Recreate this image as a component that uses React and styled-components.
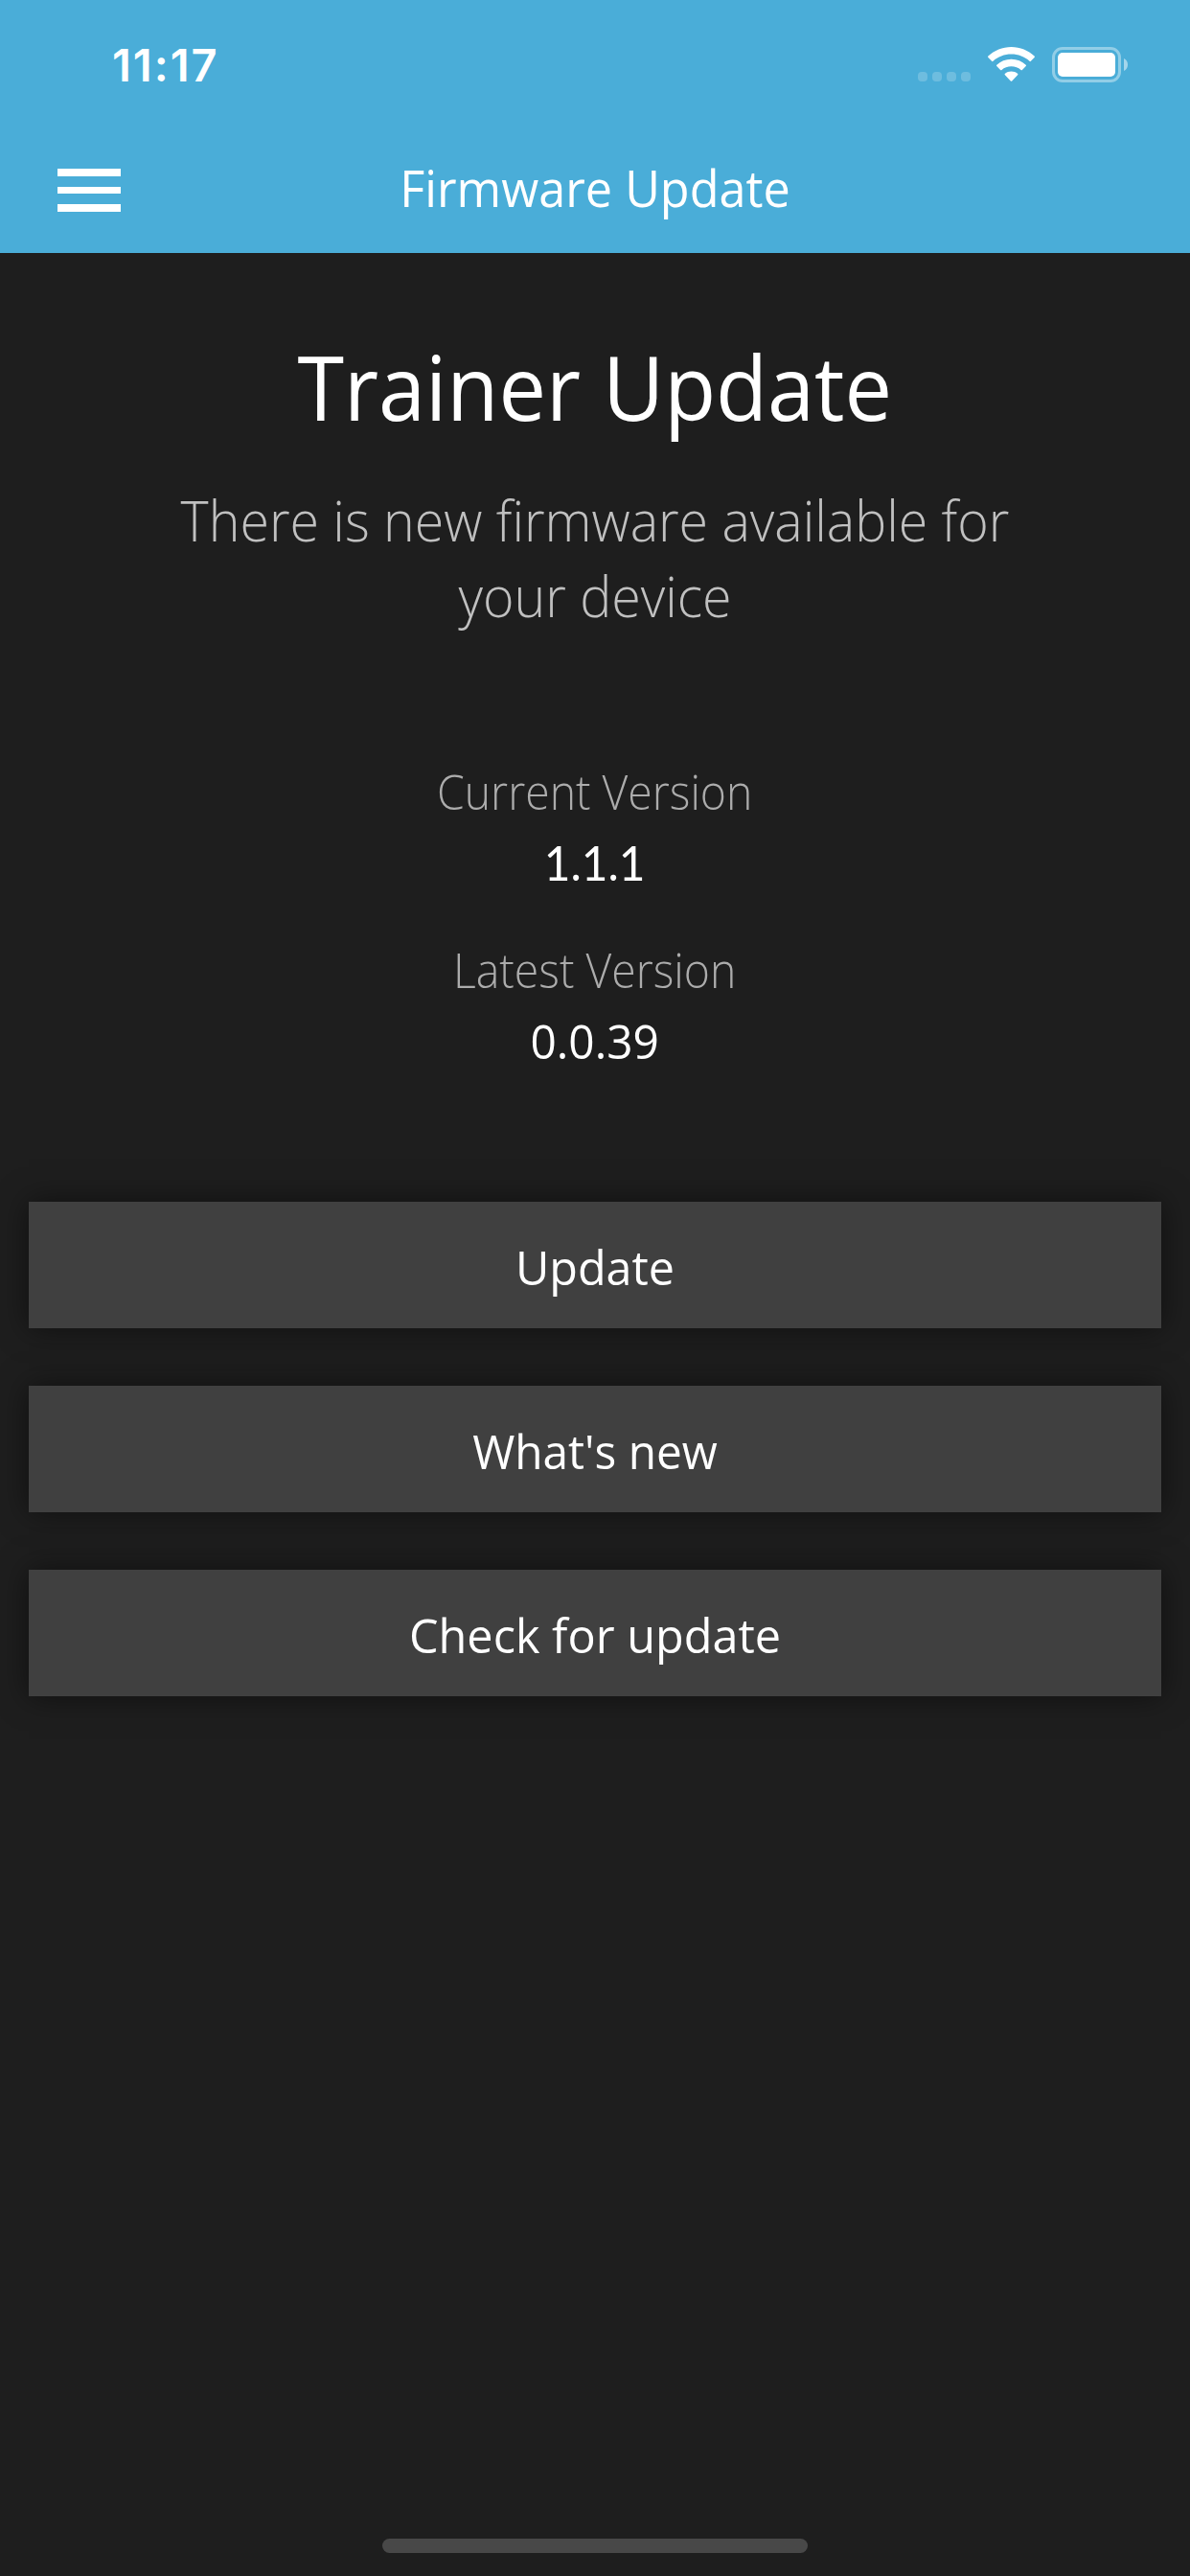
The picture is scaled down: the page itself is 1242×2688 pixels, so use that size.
import React from 'react';
import styled, { createGlobalStyle } from 'styled-components';

const actions = [
  { text: 'Update', scale: 0.97 },
  { text: "What's new", scale: 0.955 },
  { text: 'Check for update', scale: 0.972 },
];

function App() {
  return (
    <Screen>
      <GlobalStyle />
      <Header>
        <StatusBar>
          <Time>11:17</Time>
          <StatusIcons>
            <Signal>
              <Dot />
              <Dot />
              <Dot />
              <Dot />
            </Signal>
            <WifiIcon />
            <Battery>
              <BatteryBody>
                <BatteryLevel />
              </BatteryBody>
              <BatteryCap viewBox='0 0 4 13'>
                <path d='M0 0C2.4 1 4 3.5 4 6.5S2.4 12 0 13Z' fill='#fff' />
              </BatteryCap>
            </Battery>
          </StatusIcons>
        </StatusBar>
        <NavBar>
          <MenuButton aria-label='Menu'>
            <MenuBar />
            <MenuBar />
            <MenuBar />
          </MenuButton>
          <NavTitle>Firmware Update</NavTitle>
        </NavBar>
      </Header>
      <Content>
        <Title>Trainer Update</Title>
        <Message>There is new firmware available for your device</Message>
        <Versions>
          <VersionItem>
            <Label>Current Version</Label>
            <Value $font='Lato' $scale={0.955}>1.1.1</Value>
          </VersionItem>
          <VersionItem>
            <Label>Latest Version</Label>
            <Value $scale={0.956}>0.0.39</Value>
          </VersionItem>
        </Versions>
        <Actions>
          {actions.map(({ text, scale }) => (
            <Button key={text}>
              <ButtonText $scale={scale}>{text}</ButtonText>
            </Button>
          ))}
        </Actions>
      </Content>
      <Footer>
        <HomeIndicator />
      </Footer>
    </Screen>
  );
}

function WifiIcon() {
  return (
    <Wifi viewBox='0 0 49 36'>
      <path d='M24.5 0C33.7 0 42.3 3.6 48.6 9.6Q49.3 10.3 48.6 11L44.9 14.8Q44.2 15.5 43.5 14.8C38.5 10.2 31.8 7.6 24.5 7.6S10.5 10.2 5.5 14.8Q4.8 15.5 4.1 14.8L.4 11Q-.3 10.3 .4 9.6C6.7 3.6 15.3 0 24.5 0Z' />
      <path d='M24.5 12.8C30.4 12.8 35.7 15 39.7 18.7Q40.4 19.4 39.7 20.1L35.9 24Q35.2 24.7 34.5 24C31.8 21.6 28.3 20.3 24.5 20.3S17.2 21.6 14.5 24Q13.8 24.7 13.1 24L9.3 20.1Q8.6 19.4 9.3 18.7C13.3 15 18.6 12.8 24.5 12.8Z' />
      <path d='M24.5 25.6C27 25.6 29.3 26.4 31 27.8Q31.8 28.5 31.1 29.2L25.2 35.4Q24.5 36.1 23.8 35.4L17.9 29.2Q17.2 28.5 18 27.8C19.7 26.4 22 25.6 24.5 25.6Z' />
    </Wifi>
  );
}

const GlobalStyle = createGlobalStyle`
  * {
    box-sizing: border-box;
  }

  body {
    margin: 0;
    background-color: #1e1e1e;
  }
`;

const Screen = styled.div`
  display: flex;
  flex-direction: column;
  width: 1242px;
  height: 2688px;
  overflow: hidden;
  background-color: #1e1e1e;
  color: #fff;
  font-family: 'Open Sans', 'Noto Sans', sans-serif;
`;

const Header = styled.header`
  height: 264px;
  background-color: #4aadd8;
`;

const StatusBar = styled.div`
  display: flex;
  justify-content: space-between;
  height: 132px;
  padding: 0 65px 0 117px;
`;

const Time = styled.div`
  padding-top: 38px;
  font-family: Inter, sans-serif;
  font-size: 47px;
  font-weight: 600;
  line-height: 60px;
  letter-spacing: 2px;
`;

const StatusIcons = styled.div`
  display: flex;
  align-items: flex-start;
  padding-top: 49px;
`;

const Signal = styled.div`
  display: flex;
  gap: 5px;
  margin: 26px 18px 0 0;
`;

const Dot = styled.div`
  width: 10px;
  height: 10px;
  border-radius: 4px;
  background-color: rgba(255, 255, 255, 0.2);
`;

const Wifi = styled.svg`
  width: 49px;
  height: 36px;
  margin-right: 18px;
  fill: #fff;
`;

const Battery = styled.div`
  display: flex;
  align-items: center;
  gap: 3px;
`;

const BatteryBody = styled.div`
  width: 72px;
  height: 37px;
  padding: 3px;
  border: 3px solid rgba(255, 255, 255, 0.4);
  border-radius: 11px;
`;

const BatteryLevel = styled.div`
  width: 60px;
  height: 25px;
  border-radius: 5px;
  background-color: #fff;
`;

const BatteryCap = styled.svg`
  width: 4px;
  height: 13px;
  opacity: 0.5;
`;

const NavBar = styled.div`
  display: grid;
  grid-template-columns: 66px 1fr 66px;
  align-items: center;
  height: 132px;
  padding: 0 60px;
`;

const MenuButton = styled.button`
  display: flex;
  flex-direction: column;
  gap: 11px;
  padding: 1px 0 0;
  border: none;
  background: none;
`;

const MenuBar = styled.span`
  width: 66px;
  height: 7.5px;
  background-color: #fff;
`;

const NavTitle = styled.h1`
  margin: 0;
  padding-bottom: 5px;
  font-size: 53px;
  font-weight: 400;
  line-height: 72px;
  text-align: center;
  transform: scaleX(0.95);
`;

const Content = styled.main`
  display: flex;
  flex: 1;
  flex-direction: column;
  align-items: center;
  padding: 79px 30px 0;
`;

const Title = styled.h2`
  margin: 0;
  font-size: 94px;
  font-weight: 400;
  line-height: 120px;
  transform: scaleX(0.938);
`;

const Message = styled.p`
  width: 960px;
  margin: 40px 0 0;
  color: #c0c0c0;
  font-size: 59px;
  font-weight: 300;
  line-height: 79px;
  text-align: center;
  font-variant-ligatures: none;
  transform: scaleX(0.94);
`;

const Versions = styled.div`
  display: flex;
  flex-direction: column;
  gap: 38px;
  margin-top: 128px;
`;

const VersionItem = styled.div`
  text-align: center;
`;

const Label = styled.div`
  color: #acacac;
  font-size: 50px;
  font-weight: 300;
  line-height: 74px;
  transform: scaleX(0.927);
`;

const Value = styled.div`
  font-family: ${(props) => props.$font || 'inherit'};
  font-size: 50px;
  line-height: 74px;
  transform: scaleX(${(props) => props.$scale});
`;

const Actions = styled.div`
  display: flex;
  flex-direction: column;
  gap: 60px;
  width: 100%;
  margin-top: 131px;
`;

const Button = styled.button`
  height: 132px;
  padding: 3px 0 0;
  border: none;
  background-color: #404040;
  box-shadow: 0 0 30px rgba(0, 0, 0, 0.5);
  color: #fff;
  font-family: inherit;
  font-size: 50px;
`;

const ButtonText = styled.span`
  display: block;
  transform: scaleX(${(props) => props.$scale});
`;

const Footer = styled.footer`
  display: flex;
  justify-content: center;
  padding-bottom: 24px;
`;

const HomeIndicator = styled.div`
  width: 444px;
  height: 15px;
  border-radius: 8px;
  background-color: #484848;
`;

export default App;
